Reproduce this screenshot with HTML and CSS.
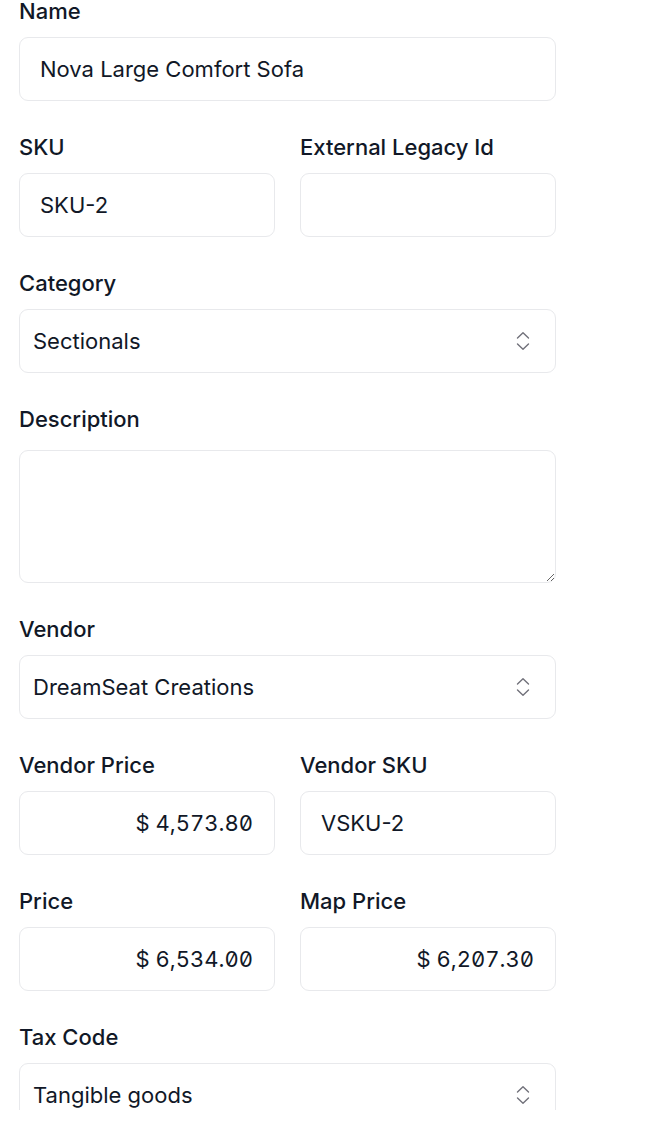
FILE: index.html
```html
<!DOCTYPE html>
<html>
<head>
<meta charset="utf-8">
<link rel="stylesheet" href="styles.css">
</head>
<body>
<div class="viewport">
  <form class="form">
    <div class="field">
      <label class="label">Name</label>
      <div class="input">Nova Large Comfort Sofa</div>
    </div>
    <div class="row">
      <div class="field">
        <label class="label">SKU</label>
        <div class="input">SKU-2</div>
      </div>
      <div class="field">
        <label class="label">External Legacy Id</label>
        <div class="input"></div>
      </div>
    </div>
    <div class="field">
      <label class="label">Category</label>
      <div class="select"><span>Sectionals</span>
        <svg class="chev" width="14" height="20" viewBox="0 0 14 20"><path d="M1.5 7 L7 1.8 L12.5 7 M1.5 13 L7 18.2 L12.5 13" fill="none" stroke="#71717a" stroke-width="1.4" stroke-linecap="round" stroke-linejoin="round"/></svg>
      </div>
    </div>
    <div class="field">
      <label class="label">Description</label>
      <textarea class="textarea"></textarea>
    </div>
    <div class="field">
      <label class="label">Vendor</label>
      <div class="select"><span>DreamSeat Creations</span>
        <svg class="chev" width="14" height="20" viewBox="0 0 14 20"><path d="M1.5 7 L7 1.8 L12.5 7 M1.5 13 L7 18.2 L12.5 13" fill="none" stroke="#71717a" stroke-width="1.4" stroke-linecap="round" stroke-linejoin="round"/></svg>
      </div>
    </div>
    <div class="row">
      <div class="field">
        <label class="label">Vendor Price</label>
        <div class="input money">$ 4,573.80</div>
      </div>
      <div class="field">
        <label class="label">Vendor SKU</label>
        <div class="input">VSKU-2</div>
      </div>
    </div>
    <div class="row">
      <div class="field">
        <label class="label">Price</label>
        <div class="input money">$ 6,534.00</div>
      </div>
      <div class="field">
        <label class="label">Map Price</label>
        <div class="input money">$ 6,207.30</div>
      </div>
    </div>
    <div class="field">
      <label class="label">Tax Code</label>
      <div class="select"><span>Tangible goods</span>
        <svg class="chev" width="14" height="20" viewBox="0 0 14 20"><path d="M1.5 7 L7 1.8 L12.5 7 M1.5 13 L7 18.2 L12.5 13" fill="none" stroke="#71717a" stroke-width="1.4" stroke-linecap="round" stroke-linejoin="round"/></svg>
      </div>
    </div>
  </form>
</div>
</body>
</html>
```
FILE: styles.css
```css
html, body {
  margin: 0;
  padding: 0;
  background: #ffffff;
}
body {
  font-family: Inter, "Noto Sans", sans-serif;
  color: #111827;
}
.viewport {
  height: 1110px;
  overflow: hidden;
}
.form {
  width: 537px;
  margin: -3px 0 0 19px;
  display: flex;
  flex-direction: column;
  gap: 32px;
}
.row {
  display: grid;
  grid-template-columns: 256px 256px;
  column-gap: 25px;
}
.field {
  display: flex;
  flex-direction: column;
}
.label {
  font-size: 22px;
  line-height: 28px;
  font-weight: 450;
  margin-bottom: 12px;
  color: #111827;
}
.input, .select, .textarea {
  box-sizing: border-box;
  border: 1px solid #e8e9ec;
  border-radius: 9px;
  background: #fff;
  font-size: 22px;
  color: #111827;
}
.input {
  height: 64px;
  display: flex;
  align-items: center;
  padding: 0 20px;
}
.money {
  justify-content: flex-end;
  font-variant-numeric: tabular-nums slashed-zero;
  padding-right: 21px;
}
.select {
  height: 64px;
  display: flex;
  align-items: center;
  justify-content: space-between;
  padding: 0 25px 0 13px;
}
.chev {
  display: block;
}
.textarea {
  display: block;
  width: 537px;
  height: 133px;
  margin-top: 5px;
  resize: vertical;
  font-family: inherit;
  padding: 12px 20px;
  outline: none;
}
```
